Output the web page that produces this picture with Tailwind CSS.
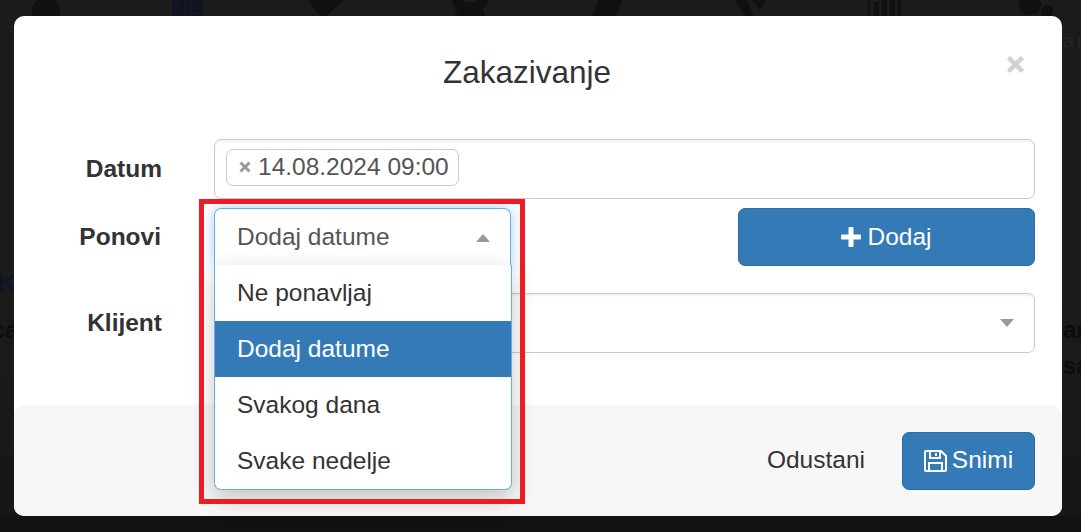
<!DOCTYPE html>
<html lang="en">
<head>
  <meta charset="UTF-8" />
  <title>Zakazivanje</title>
  <script src="https://cdn.jsdelivr.net/npm/@tailwindcss/browser@4"></script>
</head>
<body class="relative h-[532px] w-[1081px] overflow-hidden bg-[#1b1b1b] font-['Liberation_Sans',Arial,sans-serif] text-[#333]">

  <!-- Page behind the backdrop -->
  <div class="absolute inset-0 flex flex-col">
    <div class="h-[308px]"></div>
    <div class="h-[72px] border-t border-[#161616] bg-[#1a1a1a]"></div>
    <div class="h-[75px] border-t border-[#161616] bg-[#191919]"></div>
    <div class="h-[61px] border-t border-[#161616] bg-[#171717]"></div>
    <div class="flex-1 bg-[#111111]"></div>
  </div>
  <svg class="absolute left-0 top-0" width="1081" height="20" fill="#101010">
    <circle cx="46" cy="12" r="14"/>
    <path d="M172 0h31v20h-31z" fill="#0e1520"/>
    <path d="M178 0v16M185 0v16M192 0v16M172 6h30M172 13h30" stroke="#1b1b1b" fill="none"/>
    <path d="M308 0h28l8 0-18 16h-6z"/>
    <circle cx="458" cy="2" r="6"/><circle cx="482" cy="2" r="6"/><path d="M455 16q2-14 15-14t15 14z"/>
    <path d="M592 16l6-16h24l-6 16z"/>
    <path d="M735 0h12l6 16h-8zM752 0h14l-6 10z"/>
    <path d="M868 0h2v16h-2zM874 2h5v14h-5zM882 0h5v16h-5zM890 0h5v16h-5zM898 0h3v16h-3z"/>
    <circle cx="1030" cy="4" r="11"/><circle cx="1047" cy="11" r="6"/>
  </svg>
  <span class="absolute left-[1063px] top-[26px] text-[20px] tracking-[3px] text-[#252525]">an</span>
  <span class="absolute left-[-2px] top-[266px] text-[24px] font-bold text-[#0d1622]">K</span>
  <span class="absolute left-[-8px] top-[312px] text-[24px] font-bold text-[#0c0c0c]">ca</span>
  <span class="absolute left-[1063px] top-[312px] text-[24px] font-bold text-[#0c0c0c]">an</span>
  <span class="absolute left-[1063px] top-[348px] text-[24px] font-bold text-[#0c0c0c]">sa</span>

  <!-- Modal -->
  <div class="relative ml-[14px] mt-[16px] flex h-[500px] w-[1048px] flex-col rounded-[10px] bg-white">

    <!-- Header -->
    <div class="relative flex h-[123px] items-center justify-center pb-[9px] pr-[22px]">
      <h4 class="text-[31.5px] leading-none">Zakazivanje</h4>
      <svg class="absolute right-[38px] top-[40px]" width="17" height="17" viewBox="0 0 17 17" stroke="#d1d1d1" stroke-width="4.5"><path d="M1.5 1.5l14 14M15.5 1.5l-14 14"/></svg>
    </div>

    <!-- Form -->
    <div class="flex flex-1 flex-col pl-[200px] pr-[27px]">
      <div class="relative flex h-[60px] items-center rounded-[7px] border border-[#ccc] px-[11px] shadow-[inset_0_2px_2px_rgba(0,0,0,0.05)]">
        <label class="absolute left-[-200px] w-[147px] text-right text-[24.5px] font-bold">Datum</label>
        <span class="mb-[4px] flex h-[37px] items-center gap-[7px] rounded-[7px] border border-[#ccc] pl-[12px] pr-[9px] text-[24.5px] text-[#555]">
          <svg width="12" height="12" viewBox="0 0 12 12" stroke="#999" stroke-width="3"><path d="M1.5 1.5l9 9M10.5 1.5l-9 9"/></svg>
          14.08.2024 09:00
        </span>
      </div>

      <div class="relative mt-[9px] flex h-[58px] gap-[227px]">
        <label class="absolute left-[-200px] top-[11px] w-[147px] text-right text-[24.5px] font-bold">Ponovi</label>
        <div class="flex h-[58px] w-[297px] items-center justify-between rounded-t-[7px] border border-b-0 border-[#66afe9] px-[22px] text-[24.5px] text-[#555] shadow-[0_0_14px_rgba(102,175,233,0.6)]">
          Dodaj datume
          <span class="mr-[-2px] h-0 w-0 border-x-[7px] border-b-[8px] border-x-transparent border-b-[#999]"></span>
        </div>
        <button class="flex h-[58px] w-[297px] items-center justify-center gap-[6px] rounded-[7px] border border-[#2e6da4] bg-[#337ab7] text-[24.5px] text-white">
          <svg width="20" height="20" viewBox="0 0 20 20" fill="#fff"><path d="M7.5 1q0-1 1-1h3q1 0 1 1v6.5H19q1 0 1 1v3q0 1-1 1h-6.5V19q0 1-1 1h-3q-1 0-1-1v-6.5H1q-1 0-1-1v-3q0-1 1-1h6.5z"/></svg>
          Dodaj
        </button>
      </div>

      <div class="relative mt-[27px] flex h-[60px] items-center justify-end rounded-[7px] border border-[#ccc] px-[20px] shadow-[inset_0_2px_2px_rgba(0,0,0,0.05)]">
        <label class="absolute left-[-200px] w-[147px] text-right text-[24.5px] font-bold">Klijent</label>
        <span class="h-0 w-0 border-x-[7px] border-t-[8px] border-x-transparent border-t-[#999]"></span>
      </div>
    </div>

    <!-- Footer -->
    <div class="flex h-[111px] items-center justify-end gap-[37px] rounded-[10px] bg-[#f7f7f7] pr-[27px]">
      <span class="text-[24.5px]">Odustani</span>
      <button class="flex h-[58px] w-[133px] items-center justify-center gap-[5px] rounded-[7px] border border-[#2e6da4] bg-[#337ab7] text-[24.5px] text-white">
        <svg width="23" height="22" viewBox="0 0 23 22" fill="none" stroke="#fff" stroke-width="2"><path d="M2 1h15l5 5v14q0 1-1 1H2q-1 0-1-1V2q0-1 1-1z"/><path d="M6 1v7h10V1M12 3v3M5 21v-8h13v8"/></svg>
        Snimi
      </button>
    </div>
  </div>

  <!-- Open dropdown, hangs over the modal -->
  <div class="absolute left-[214px] top-[265px] w-[298px] overflow-hidden rounded-b-[7px] border border-t-0 border-[#66afe9] bg-white text-[24.5px] shadow-[0_8px_24px_rgba(0,0,0,0.22)]">
    <div class="flex h-[56px] items-center px-[22px]">Ne ponavljaj</div>
    <div class="flex h-[56px] items-center bg-[#337ab7] px-[22px] text-white">Dodaj datume</div>
    <div class="flex h-[56px] items-center px-[22px]">Svakog dana</div>
    <div class="flex h-[56px] items-center px-[22px]">Svake nedelje</div>
  </div>

  <!-- Red highlight drawn on the screenshot -->
  <div class="pointer-events-none absolute left-[199px] top-[199px] h-[305px] w-[326px] border-[5px] border-[#ed1c24]"></div>
</body>
</html>
